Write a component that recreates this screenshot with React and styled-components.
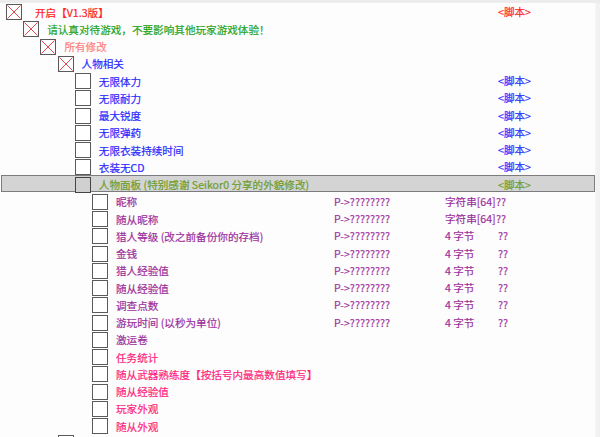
import React from 'react'
import styled, { createGlobalStyle } from 'styled-components'

const RED = '#ff2424'
const GREEN = '#22a322'
const SALMON = '#ff7f7f'
const BLUE = '#2a2aff'
const OLIVE = '#6c9c2c'
const PURPLE = '#9b2f9b'
const PINK = '#ff1f7c'

const rows = [
  { level: 0, checked: true, label: '开启【V1.3版】', color: RED, script: true, first: true },
  { level: 1, checked: true, label: '请认真对待游戏，不要影响其他玩家游戏体验！', color: GREEN },
  { level: 2, checked: true, label: '所有修改', color: SALMON },
  { level: 3, checked: true, label: '人物相关', color: BLUE },
  { level: 4, label: '无限体力', color: BLUE, script: true },
  { level: 4, label: '无限耐力', color: BLUE, script: true },
  { level: 4, label: '最大锐度', color: BLUE, script: true },
  { level: 4, label: '无限弹药', color: BLUE, script: true },
  { level: 4, label: '无限衣装持续时间', color: BLUE, script: true },
  { level: 4, label: '衣装无CD', color: BLUE, script: true },
  { level: 4, label: '人物面板 (特别感谢 Seikor0 分享的外貌修改)', color: OLIVE, script: true, selected: true },
  { level: 5, label: '昵称', color: PURPLE, addr: 'P->????????', type: '字符串[64]', value: '??', tight: true },
  { level: 5, label: '随从昵称', color: PURPLE, addr: 'P->????????', type: '字符串[64]', value: '??', tight: true },
  { level: 5, label: '猎人等级 (改之前备份你的存档)', color: PURPLE, addr: 'P->????????', type: '4 字节', value: '??' },
  { level: 5, label: '金钱', color: PURPLE, addr: 'P->????????', type: '4 字节', value: '??' },
  { level: 5, label: '猎人经验值', color: PURPLE, addr: 'P->????????', type: '4 字节', value: '??' },
  { level: 5, label: '随从经验值', color: PURPLE, addr: 'P->????????', type: '4 字节', value: '??' },
  { level: 5, label: '调查点数', color: PURPLE, addr: 'P->????????', type: '4 字节', value: '??' },
  { level: 5, label: '游玩时间 (以秒为单位)', color: PURPLE, addr: 'P->????????', type: '4 字节', value: '??' },
  { level: 5, label: '激运卷', color: PURPLE },
  { level: 5, label: '任务统计', color: PINK },
  { level: 5, label: '随从武器熟练度【按括号内最高数值填写】', color: PINK },
  { level: 5, label: '随从经验值', color: PINK },
  { level: 5, label: '玩家外观', color: PINK },
  { level: 5, label: '随从外观', color: PINK },
  { level: 3, label: '', color: BLUE },
]

function App() {
  return (
    <>
      <GlobalStyle />
      <Window>
        <TopBar />
        <Body>
          <List>
            {rows.map((r, i) => (
              <Row key={i} selected={r.selected}>
                <NameCell style={{ paddingLeft: 6 + r.level * 17.2 }}>
                  <Box selected={r.selected}>
                    {r.checked && (
                      <svg width="14" height="14" viewBox="0 0 14 14">
                        <path d="M0.5 0.5L13.5 13.5M13.5 0.5L0.5 13.5" stroke="#e8484c" strokeWidth="1" />
                      </svg>
                    )}
                  </Box>
                  <Label color={r.color} first={r.first}>{r.label}</Label>
                </NameCell>
                <Cell color={r.color}>{r.addr}</Cell>
                <Cell color={r.color}>{r.type}</Cell>
                <Cell color={r.color} shift={r.tight}>
                  {r.script ? '<脚本>' : r.value}
                </Cell>
              </Row>
            ))}
          </List>
          <ScrollEdge />
        </Body>
      </Window>
    </>
  )
}

const GlobalStyle = createGlobalStyle`
html, body {
  margin: 0;
  padding: 0;
  background: #fcfcfc;
}
body {
  font-family: "Noto Sans CJK SC", "Noto Sans", sans-serif;
}
`

const Window = styled.div`
width: 600px;
height: 437px;
overflow: hidden;
display: flex;
flex-direction: column;
background: #fdfdfd;
`

const TopBar = styled.div`
height: 2.5px;
flex-shrink: 0;
background: #ececec;
`

const Body = styled.div`
flex: 1;
display: flex;
min-height: 0;
`

const List = styled.ul`
list-style: none;
margin: 0;
padding: 0;
flex: 1;
`

const ScrollEdge = styled.div`
width: 4px;
background: #f1f1f1;
border-left: 1px solid #f6f6f6;
`

const Row = styled.li`
box-sizing: border-box;
height: 17.25px;
display: grid;
grid-template-columns: 332px 111px 53px 1fr;
align-items: center;
margin-left: 1px;
font-size: 10.6px;
line-height: 17px;
white-space: nowrap;
-webkit-text-stroke: 0.2px currentColor;
background: ${p => (p.selected ? '#d4d4d4' : 'transparent')};
border: 1px solid ${p => (p.selected ? '#7c7c80' : 'transparent')};
`

const NameCell = styled.div`
display: flex;
align-items: center;
margin-left: -2px;
`

const Box = styled.span`
box-sizing: border-box;
width: 16px;
height: 16px;
flex-shrink: 0;
border: 1px solid ${p => (p.selected ? '#444' : '#5a5a5a')};
background: ${p => (p.selected ? '#d0d0d0' : '#fff')};
display: flex;
align-items: center;
justify-content: center;
`

const Label = styled.span`
color: ${p => p.color};
margin-left: ${p => (p.first ? '13px' : '8px')};
`

const Cell = styled.span`
color: ${p => p.color};
margin-left: ${p => (p.shift ? '-2px' : '0')};
margin-top: -1px;
`

export default App
